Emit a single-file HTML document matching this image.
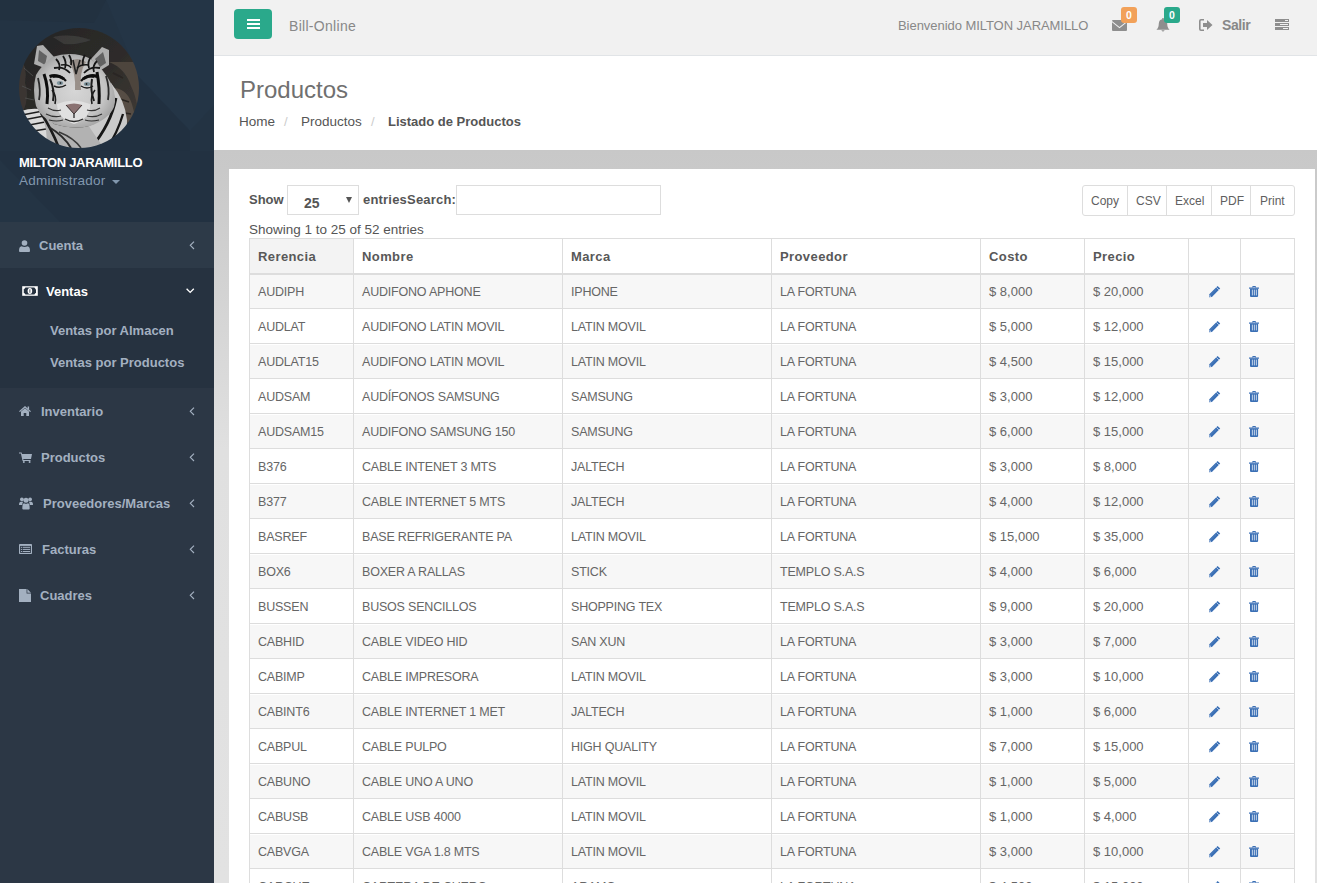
<!DOCTYPE html>
<html><head><meta charset="utf-8"><style>
*{margin:0;padding:0;box-sizing:border-box}
html,body{width:1317px;height:883px;overflow:hidden;background:#fff}
body{font-family:"Liberation Sans",sans-serif;position:relative;color:#555}
div,span{position:absolute;white-space:nowrap}
.ic{line-height:0}
.ic svg{display:block}
.mi{font-weight:bold;font-size:13px;color:#a3b0c0}
.tb{background:#dddddd}
.th{font-weight:bold;font-size:13px;color:#585858;height:34px;line-height:34px;letter-spacing:0.4px}
.td{font-size:12.5px;color:#666;height:33px;line-height:35px;letter-spacing:-0.2px}
.td.num{letter-spacing:0;font-size:13px;line-height:33px}
.btn{top:187px;height:28px;line-height:28px;font-size:12px;color:#606060}
</style></head><body>
<!-- sidebar -->
<div style="left:0;top:0;width:214px;height:883px;background:#2c3745"></div>
<div style="left:0;top:0;width:214px;height:222px;background:#233343;overflow:hidden">
<svg width="214" height="222" style="position:absolute;left:0;top:0"><path d="M0 0 H106 L94 23 L0 20Z" fill="#223140"/><path d="M106 0 H214 V105 L190 131 L138 76Z" fill="#243546"/><path d="M138 76 L190 131 V151 H100 V110Z" fill="#213040" opacity="0.8"/><path d="M0 151 H214 V222 H0Z" fill="#223141"/><path d="M0 160 L60 222 H0Z" fill="#243444"/></svg>
</div>
<svg width="120" height="120" viewBox="0 0 120 120" style="position:absolute;left:19px;top:28px">
<defs><clipPath id="cc"><circle cx="60" cy="60" r="60"/></clipPath>
<filter id="bl" x="-5%" y="-5%" width="110%" height="110%"><feGaussianBlur stdDeviation="0.6"/></filter>
<radialGradient id="fur" cx="50%" cy="50%" r="58%"><stop offset="0" stop-color="#d6d6d6"/><stop offset="0.65" stop-color="#c4c4c4"/><stop offset="1" stop-color="#9a9a9a"/></radialGradient>
<linearGradient id="rock" x1="0" y1="0" x2="1" y2="1"><stop offset="0" stop-color="#242424"/><stop offset="0.55" stop-color="#2e2c2a"/><stop offset="1" stop-color="#453f39"/></linearGradient></defs>
<g clip-path="url(#cc)"><g filter="url(#bl)">
<rect width="120" height="120" fill="url(#rock)"/>
<path d="M34 9 Q52 5 72 12 Q60 17 45 16 Z" fill="#3e3e3e" opacity="0.8"/>
<path d="M0 28 Q9 38 6 55 Q11 68 4 84 H0Z" fill="#3a3633"/>
<path d="M5 40 L14 48 M3 58 L12 62 M6 70 L15 72" stroke="#555" stroke-width="1" opacity="0.7"/>
<path d="M90 34 Q106 40 112 58 Q118 70 120 90 V34Z" fill="#4d453e"/>
<path d="M96 60 Q110 62 114 80 L118 96 L104 94Z" fill="#574d44"/>
<path d="M94 45 L104 50 M98 70 L110 74 M100 84 L112 86" stroke="#2a2623" stroke-width="1.5"/>
<path d="M2 83 Q14 79 26 82 L34 120 H0Z" fill="#dadada"/>
<path d="M3 87 L24 83 M4 92 L25 88 M5 98 L26 94 M8 104 L27 101" stroke="#1e1e1e" stroke-width="1.5"/>
<path d="M92 55 Q106 72 108 92 Q109 108 100 120 H60 L70 98 Q88 90 92 55Z" fill="#cacaca"/>
<path d="M97 70 Q92 96 72 120" stroke="#151515" stroke-width="2.8" fill="none"/>
<path d="M104 86 Q98 106 88 120" stroke="#151515" stroke-width="2.3" fill="none"/>
<path d="M92 62 Q90 75 84 88" stroke="#222" stroke-width="1.6" fill="none"/>
<path d="M20 82 Q30 100 27 120 H85 Q72 102 70 98 Q55 102 35 96Z" fill="#b2b2b2"/>
<path d="M22 85 Q32 100 40 120" stroke="#1b1b1b" stroke-width="2.6" fill="none"/>
<path d="M30 99 Q45 108 52 120" stroke="#2a2a2a" stroke-width="2" fill="none"/>
<path d="M40 104 Q55 110 62 120" stroke="#3a3a3a" stroke-width="1.5" fill="none"/>
<path d="M15 36 L18 18 L24 17 L35 29 L28 41Z" fill="#adadad"/>
<path d="M19 33 L20 22 L28 28 L26 37Z" fill="#626262"/>
<path d="M72 31 L83 19 L90 22 L90 37 L82 42Z" fill="#adadad"/>
<path d="M76 31 L84 24 L87 35 L81 39Z" fill="#626262"/>
<path d="M33 29 Q54 22 72 31 Q84 40 93 57 Q98 70 95 79 Q90 91 71 98 Q54 102 35 96 Q21 88 17 78 Q13 62 17 47 Q22 38 33 29Z" fill="url(#fur)"/>
<path d="M50 34 Q57 44 56 62 L62 62 Q60 44 67 34 Q58 28 50 34Z" fill="#8f857e" opacity="0.85"/>
<path d="M37 31 Q42 36 40 42 M44 28 Q48 34 46 40 M50 27 Q53 32 52 37 M66 27 Q63 32 64 37 M72 29 Q68 34 70 40 M78 33 Q73 38 75 44" stroke="#141414" stroke-width="1.8" fill="none"/>
<path d="M35 40 Q45 38 51 45 M65 45 Q71 38 81 40" stroke="#141414" stroke-width="1.8" fill="none"/>
<path d="M54 32 L57 46 L61 32" stroke="#222" stroke-width="1.6" fill="none"/>
<path d="M25 46 Q30 60 28 76" stroke="#0f0f0f" stroke-width="3" fill="none"/>
<path d="M78 44 Q81 60 80 76" stroke="#0f0f0f" stroke-width="3" fill="none"/>
<path d="M31 51 Q36 62 34 73" stroke="#1a1a1a" stroke-width="2" fill="none"/>
<path d="M73 51 Q71 62 75 73" stroke="#1a1a1a" stroke-width="2" fill="none"/>
<path d="M19 50 Q22 62 20 72" stroke="#2a2a2a" stroke-width="1.8" fill="none"/>
<path d="M87 48 Q91 60 89 72" stroke="#2a2a2a" stroke-width="1.8" fill="none"/>
<path d="M34 49 Q41 46 47 53 M62 53 Q68 46 75 49" stroke="#111" stroke-width="2.2" fill="none"/>
<path d="M30 47 Q38 44 46 50 L44 52 Q38 48 31 50Z" fill="#111"/><path d="M79 47 Q71 44 63 50 L65 52 Q71 48 78 50Z" fill="#111"/><path d="M33 62 Q38 68 36 76 M76 62 Q71 68 73 76" stroke="#1a1a1a" stroke-width="1.6" fill="none"/><path d="M42 37 Q50 36 52 40 M58 40 Q62 36 70 37" stroke="#181818" stroke-width="1.4" fill="none"/><ellipse cx="41" cy="55" rx="3.2" ry="2" fill="#8197a0"/><ellipse cx="68" cy="56" rx="3.2" ry="2" fill="#8197a0"/>
<circle cx="41.5" cy="55" r="0.9" fill="#222"/><circle cx="67.5" cy="56" r="0.9" fill="#222"/>
<path d="M35 58 Q41 61 47 57 M62 58 Q68 62 74 58" stroke="#1a1a1a" stroke-width="1.4" fill="none"/>
<path d="M38 76 Q54 69 71 76 Q72 90 55 96 Q38 90 38 76Z" fill="#e0e0e0"/>
<path d="M47 77 Q55 74 63 77 L55 86Z" fill="#8a7272"/>
<path d="M47 77 L55 86 L63 77" stroke="#3a2f2f" stroke-width="1" fill="none"/>
<path d="M55 86 V90 M46 91 Q55 96 64 91" stroke="#2a2a2a" stroke-width="1.3" fill="none"/>
<path d="M29 80 Q36 84 42 82 M68 82 Q75 84 81 80 M27 86 Q35 90 42 88 M68 88 Q76 90 83 86 M30 92 Q38 94 44 92 M66 92 Q72 94 80 92" stroke="#333" stroke-width="1.2" fill="none"/>
</g></g></svg>
<div style="left:19px;top:155px;font-weight:bold;font-size:13px;line-height:16px;color:#fff;letter-spacing:-0.3px">MILTON JARAMILLO</div>
<div style="left:19px;top:173px;font-size:13.5px;line-height:16px;color:#8197ae;letter-spacing:0.25px">Administrador</div>
<svg width="8" height="4" style="position:absolute;left:112px;top:180px"><path d="M0 0 H8 L4 4Z" fill="#8197ae"/></svg>
<div style="position:absolute;left:0;top:222px;width:214px;height:46px;background:#2d3a48"></div>
<div class="ic" style="left:19px;top:240px"><svg width="11" height="12" viewBox="0 0 11 12"><circle cx="5.5" cy="3" r="2.8" fill="#a3b0c0"/><path d="M0 11 Q0 6.5 2.5 6.2 Q5.5 7.6 8.5 6.2 Q11 6.5 11 11 Q11 12 10 12 H1 Q0 12 0 11Z" fill="#a3b0c0"/></svg></div>
<div class="mi" style="left:39px;top:223px;height:46px;line-height:46px;color:#a3b0c0">Cuenta</div>
<div class="ic" style="left:189px;top:241px"><svg width="6" height="9" viewBox="0 0 6 9"><path d="M5 0.6 L1.3 4.3 L5 8" fill="none" stroke="#a3b0c0" stroke-width="1.15"/></svg></div><div style="position:absolute;left:0;top:268px;width:214px;height:120px;background:#263240"></div><div class="ic" style="left:22px;top:286px"><svg width="16" height="10" viewBox="0 0 16 10"><rect x="0.2" y="0.2" width="15.6" height="9.6" fill="#fff"/><path d="M3.5 1.6 H12.3 L14 3.6 V6.4 L12.3 8.4 H3.5 L1.8 6.4 V3.6Z" fill="#263240"/><ellipse cx="7.9" cy="5" rx="2.3" ry="2.9" fill="#fff"/><rect x="7.5" y="3.3" width="0.8" height="3.4" fill="#263240"/></svg></div><div class="mi" style="left:46px;top:269px;height:46px;line-height:46px;color:#fff">Ventas</div><div class="ic" style="left:186px;top:288px"><svg width="9" height="6" viewBox="0 0 9 6"><path d="M0.6 0.8 L4.2 4.4 L7.8 0.8" fill="none" stroke="#fff" stroke-width="1.35"/></svg></div><div class="mi" style="left:50px;top:315px;height:32px;line-height:32px">Ventas por Almacen</div><div class="mi" style="left:50px;top:347px;height:32px;line-height:32px">Ventas por Productos</div><div class="ic" style="left:19px;top:406px"><svg width="12" height="10" viewBox="0 0 12 10"><path d="M6 0 L12 5.2 L11.1 6.1 L6 1.8 L0.9 6.1 L0 5.2 Z" fill="#a3b0c0"/><path d="M2 5.5 L6 2.3 L10 5.5 V10 H7.3 V7 H4.7 V10 H2Z" fill="#a3b0c0"/><rect x="8.6" y="0.5" width="1.5" height="2.8" fill="#a3b0c0"/></svg></div>
<div class="mi" style="left:41px;top:389px;height:46px;line-height:46px;color:#a3b0c0">Inventario</div>
<div class="ic" style="left:189px;top:407px"><svg width="6" height="9" viewBox="0 0 6 9"><path d="M5 0.6 L1.3 4.3 L5 8" fill="none" stroke="#a3b0c0" stroke-width="1.15"/></svg></div><div class="ic" style="left:19px;top:452px"><svg width="13" height="11" viewBox="0 0 13 11"><path d="M0 0.5 H2.6 L3 2 H13 L12 7 H4.2 L4.5 8 H11.5 V9 H3.6 L1.9 1.6 H0Z" fill="#a3b0c0"/><circle cx="4.8" cy="10" r="1" fill="#a3b0c0"/><circle cx="10.6" cy="10" r="1" fill="#a3b0c0"/></svg></div>
<div class="mi" style="left:41px;top:435px;height:46px;line-height:46px;color:#a3b0c0">Productos</div>
<div class="ic" style="left:189px;top:453px"><svg width="6" height="9" viewBox="0 0 6 9"><path d="M5 0.6 L1.3 4.3 L5 8" fill="none" stroke="#a3b0c0" stroke-width="1.15"/></svg></div><div class="ic" style="left:19px;top:497px"><svg width="14" height="13" viewBox="0 0 14 13"><circle cx="2.9" cy="2.3" r="1.9" fill="#a3b0c0"/><circle cx="11.1" cy="2.3" r="1.9" fill="#a3b0c0"/><circle cx="7" cy="3.3" r="2.5" fill="#a3b0c0"/><path d="M0 8 Q0 4.8 2 4.8 H4.2 Q3.3 5.8 3.3 8Z" fill="#a3b0c0"/><path d="M14 8 Q14 4.8 12 4.8 H9.8 Q10.7 5.8 10.7 8Z" fill="#a3b0c0"/><path d="M3.3 11.5 Q3.3 6.3 5.2 6.3 Q7 7.4 8.8 6.3 Q10.7 6.3 10.7 11.5 Q10.7 12.6 9.7 12.6 H4.3 Q3.3 12.6 3.3 11.5Z" fill="#a3b0c0"/></svg></div>
<div class="mi" style="left:43px;top:481px;height:46px;line-height:46px;color:#a3b0c0">Proveedores/Marcas</div>
<div class="ic" style="left:189px;top:499px"><svg width="6" height="9" viewBox="0 0 6 9"><path d="M5 0.6 L1.3 4.3 L5 8" fill="none" stroke="#a3b0c0" stroke-width="1.15"/></svg></div><div class="ic" style="left:19px;top:544px"><svg width="13" height="10" viewBox="0 0 13 10"><rect x="0" y="0" width="13" height="10" rx="0.8" fill="#a3b0c0"/><rect x="1.1" y="1.9" width="10.8" height="7" fill="#2c3745"/><rect x="1.9" y="2.8" width="1.4" height="1" fill="#a3b0c0"/><rect x="4" y="2.8" width="7.1" height="1" fill="#a3b0c0"/><rect x="1.9" y="4.9" width="1.4" height="1" fill="#a3b0c0"/><rect x="4" y="4.9" width="7.1" height="1" fill="#a3b0c0"/><rect x="1.9" y="7" width="1.4" height="1" fill="#a3b0c0"/><rect x="4" y="7" width="7.1" height="1" fill="#a3b0c0"/></svg></div>
<div class="mi" style="left:42px;top:527px;height:46px;line-height:46px;color:#a3b0c0">Facturas</div>
<div class="ic" style="left:189px;top:545px"><svg width="6" height="9" viewBox="0 0 6 9"><path d="M5 0.6 L1.3 4.3 L5 8" fill="none" stroke="#a3b0c0" stroke-width="1.15"/></svg></div><div class="ic" style="left:19px;top:589px"><svg width="12" height="13" viewBox="0 0 12 13"><path d="M0 0 H7.6 V4.4 H12 V13 H0Z" fill="#a3b0c0"/><path d="M8.3 0 L12 3.7 H8.3Z" fill="#a3b0c0"/></svg></div>
<div class="mi" style="left:40px;top:573px;height:46px;line-height:46px;color:#a3b0c0">Cuadres</div>
<div class="ic" style="left:189px;top:591px"><svg width="6" height="9" viewBox="0 0 6 9"><path d="M5 0.6 L1.3 4.3 L5 8" fill="none" stroke="#a3b0c0" stroke-width="1.15"/></svg></div>
<!-- topbar -->
<div style="left:214px;top:0;width:1103px;height:55px;background:#f1f1f1"></div>
<div style="left:214px;top:55px;width:1103px;height:1px;background:#e1e4e7"></div>
<div style="left:234px;top:9px;width:38px;height:30px;background:#2aa98b;border-radius:4px"></div>
<div style="left:247px;top:19px;width:13px;height:2px;background:#fff"></div>
<div style="left:247px;top:23px;width:13px;height:2px;background:#fff"></div>
<div style="left:247px;top:27px;width:13px;height:2px;background:#fff"></div>
<div style="left:289px;top:17px;font-size:14px;line-height:18px;color:#888;letter-spacing:0.3px">Bill-Online</div>
<div style="left:898px;top:17px;font-size:13px;line-height:18px;color:#888;letter-spacing:-0.05px">Bienvenido MILTON JARAMILLO</div>
<svg width="15" height="11" style="position:absolute;left:1112px;top:20px" viewBox="0 0 15 11"><path d="M0 1 Q0 0 1 0 H14 Q15 0 15 1 V0.9 L7.5 6.9 L0 0.9Z" fill="#8e8e8e"/><path d="M0 2.3 L7.5 8.3 L15 2.3 V10 Q15 11 14 11 H1 Q0 11 0 10Z" fill="#8e8e8e"/></svg>
<div style="left:1121px;top:7px;width:16px;height:16px;background:#f2a159;border-radius:3px;color:#fff;font-weight:bold;font-size:10.5px;line-height:17px;text-align:center">0</div>
<svg width="14" height="14" style="position:absolute;left:1156px;top:18px" viewBox="0 0 14 14"><circle cx="7" cy="1" r="1" fill="#8e8e8e"/><path d="M7 1.2 Q11 1.2 11.2 5.5 Q11.3 10 13.6 11.8 H0.4 Q2.7 10 2.8 5.5 Q3 1.2 7 1.2Z" fill="#8e8e8e"/><path d="M5.3 12.2 Q7 14.6 8.7 12.2Z" fill="#8e8e8e"/></svg>
<div style="left:1164px;top:7px;width:16px;height:16px;background:#2aa98b;border-radius:3px;color:#fff;font-weight:bold;font-size:10.5px;line-height:17px;text-align:center">0</div>
<svg width="14" height="12" style="position:absolute;left:1199px;top:19px" viewBox="0 0 14 12"><path d="M5 0.8 H2 Q0.8 0.8 0.8 2 V10 Q0.8 11.2 2 11.2 H5" fill="none" stroke="#8e8e8e" stroke-width="1.6"/><path d="M4 4 H8 V1 L13.5 6 L8 11 V8 H4Z" fill="#8e8e8e"/></svg>
<div style="left:1222px;top:16px;font-size:14px;font-weight:bold;line-height:18px;color:#888;letter-spacing:-0.4px">Salir</div>
<svg width="14" height="12" style="position:absolute;left:1275px;top:19px" viewBox="0 0 14 12"><rect x="0" y="0" width="14" height="3" fill="#8e8e8e"/><rect x="0" y="4" width="14" height="3" fill="#8e8e8e"/><rect x="0" y="8" width="14" height="3" fill="#8e8e8e"/><rect x="10" y="1" width="3" height="1" fill="#f1f1f1"/><rect x="5" y="5" width="8" height="1" fill="#f1f1f1"/><rect x="8" y="9" width="5" height="1" fill="#f1f1f1"/></svg>
<!-- page header -->
<div style="left:240px;top:75px;font-size:24px;line-height:30px;color:#707070">Productos</div>
<div style="left:239px;top:113px;font-size:13.5px;line-height:18px;color:#555">Home</div>
<div style="left:284px;top:113px;font-size:13px;line-height:18px;color:#ccc">/</div>
<div style="left:301px;top:113px;font-size:13.5px;line-height:18px;color:#555">Productos</div>
<div style="left:371px;top:113px;font-size:13px;line-height:18px;color:#ccc">/</div>
<div style="left:388px;top:113px;font-size:13px;font-weight:bold;line-height:18px;color:#555">Listado de Productos</div>
<!-- content bg -->
<div style="left:214px;top:150px;width:1103px;height:733px;background:linear-gradient(#c8c8c8 0px,#c9c9c9 20px,#e0e0e0 300px,#e2e2e2 733px)"></div>
<div style="left:229px;top:169px;width:1086px;height:714px;background:#fff"></div>
<div style="left:249px;top:194px;font-weight:bold;font-size:13px;line-height:12px;color:#555">Show</div>
<div style="left:287px;top:185px;width:72px;height:30px;border:1px solid #ddd;background:#fff"></div>
<div style="left:304px;top:197px;font-weight:bold;font-size:14px;line-height:13px;color:#555">25</div>
<svg width="6" height="6" style="position:absolute;left:346px;top:197px"><path d="M0 0 H6 L3 6Z" fill="#555"/></svg>
<div style="left:363px;top:194px;font-weight:bold;font-size:13px;line-height:12px;color:#555;letter-spacing:0.2px">entriesSearch:</div>
<div style="left:456px;top:185px;width:205px;height:30px;border:1px solid #ddd;background:#fff"></div>
<div style="left:1082px;top:185px;width:213px;height:31px;border:1px solid #ddd;border-radius:3px;background:#fff"></div>
<div style="left:1127px;top:186px;width:1px;height:29px;background:#ddd"></div>
<div style="left:1166px;top:186px;width:1px;height:29px;background:#ddd"></div>
<div style="left:1211px;top:186px;width:1px;height:29px;background:#ddd"></div>
<div style="left:1250px;top:186px;width:1px;height:29px;background:#ddd"></div>
<div class="btn" style="left:1091px">Copy</div>
<div class="btn" style="left:1136px">CSV</div>
<div class="btn" style="left:1175px">Excel</div>
<div class="btn" style="left:1220px">PDF</div>
<div class="btn" style="left:1260px">Print</div>
<div style="left:249px;top:224px;font-size:13.5px;line-height:12px;color:#555">Showing 1 to 25 of 52 entries</div>
<div class="tb" style="left:249px;top:238px;width:1046px;height:1px"></div>
<div style="position:absolute;left:250px;top:239px;width:103px;height:34px;background:#f3f3f3"></div>
<div class="th" style="left:258px;top:240px">Rerencia</div>
<div class="th" style="left:362px;top:240px">Nombre</div>
<div class="th" style="left:571px;top:240px">Marca</div>
<div class="th" style="left:780px;top:240px">Proveedor</div>
<div class="th" style="left:989px;top:240px">Costo</div>
<div class="th" style="left:1093px;top:240px">Precio</div>
<div class="th" style="left:1197px;top:240px"></div>
<div class="th" style="left:1249px;top:240px"></div>
<div class="tb" style="left:249px;top:273px;width:1046px;height:2px"></div>
<div style="position:absolute;left:250px;top:275px;width:1044px;height:33px;background:#f7f7f7"></div>
<div class="td" style="left:258px;top:275px">AUDIPH</div>
<div class="td" style="left:362px;top:275px">AUDIFONO APHONE</div>
<div class="td" style="left:571px;top:275px">IPHONE</div>
<div class="td" style="left:780px;top:275px">LA FORTUNA</div>
<div class="td num" style="left:989px;top:275px">$ 8,000</div>
<div class="td num" style="left:1093px;top:275px">$ 20,000</div>
<div class="ic" style="left:1209px;top:286px"><svg width="12" height="12" viewBox="0 0 12 12"><path d="M8.6 0 L11.2 2.6 L2.9 10.9 L0 11.2 L0.3 8.3 Z" fill="#3a6fb5"/><path d="M7.3 1.3 L9.9 3.9" stroke="#dbe6f3" stroke-width="0.75"/><path d="M1.8 8.6 L7.6 2.8" stroke="#7fa3d0" stroke-width="0.6" stroke-dasharray="0.8 0.8"/><path d="M0.7 8.9 L2.3 10.5 L0.5 10.7Z" fill="#f0f4fa"/></svg></div>
<div class="ic" style="left:1249px;top:286px"><svg width="10" height="12" viewBox="0 0 10 12"><path d="M3.2 1.6 V0.9 Q3.2 0 4.1 0 H6.1 Q7 0 7 0.9 V1.6 H6 V1 H4.2 V1.6Z" fill="#3a6fb5"/><rect x="0" y="1.5" width="10" height="1.2" fill="#3a6fb5"/><path d="M1 2.6 H9.1 V10 Q9.1 11.1 8 11.1 H2.1 Q1 11.1 1 10Z" fill="#3a6fb5"/><rect x="2.9" y="3.6" width="0.8" height="5.8" fill="#e6edf6"/><rect x="4.9" y="3.6" width="0.8" height="5.8" fill="#e6edf6"/><rect x="6.9" y="3.6" width="0.8" height="5.8" fill="#e6edf6"/></svg></div>
<div class="tb" style="left:249px;top:308px;width:1046px;height:1px"></div>
<div style="position:absolute;left:250px;top:310px;width:1044px;height:33px;background:#fff"></div>
<div class="td" style="left:258px;top:310px">AUDLAT</div>
<div class="td" style="left:362px;top:310px">AUDIFONO LATIN MOVIL</div>
<div class="td" style="left:571px;top:310px">LATIN MOVIL</div>
<div class="td" style="left:780px;top:310px">LA FORTUNA</div>
<div class="td num" style="left:989px;top:310px">$ 5,000</div>
<div class="td num" style="left:1093px;top:310px">$ 12,000</div>
<div class="ic" style="left:1209px;top:321px"><svg width="12" height="12" viewBox="0 0 12 12"><path d="M8.6 0 L11.2 2.6 L2.9 10.9 L0 11.2 L0.3 8.3 Z" fill="#3a6fb5"/><path d="M7.3 1.3 L9.9 3.9" stroke="#dbe6f3" stroke-width="0.75"/><path d="M1.8 8.6 L7.6 2.8" stroke="#7fa3d0" stroke-width="0.6" stroke-dasharray="0.8 0.8"/><path d="M0.7 8.9 L2.3 10.5 L0.5 10.7Z" fill="#f0f4fa"/></svg></div>
<div class="ic" style="left:1249px;top:321px"><svg width="10" height="12" viewBox="0 0 10 12"><path d="M3.2 1.6 V0.9 Q3.2 0 4.1 0 H6.1 Q7 0 7 0.9 V1.6 H6 V1 H4.2 V1.6Z" fill="#3a6fb5"/><rect x="0" y="1.5" width="10" height="1.2" fill="#3a6fb5"/><path d="M1 2.6 H9.1 V10 Q9.1 11.1 8 11.1 H2.1 Q1 11.1 1 10Z" fill="#3a6fb5"/><rect x="2.9" y="3.6" width="0.8" height="5.8" fill="#e6edf6"/><rect x="4.9" y="3.6" width="0.8" height="5.8" fill="#e6edf6"/><rect x="6.9" y="3.6" width="0.8" height="5.8" fill="#e6edf6"/></svg></div>
<div class="tb" style="left:249px;top:343px;width:1046px;height:1px"></div>
<div style="position:absolute;left:250px;top:345px;width:1044px;height:33px;background:#f7f7f7"></div>
<div class="td" style="left:258px;top:345px">AUDLAT15</div>
<div class="td" style="left:362px;top:345px">AUDIFONO LATIN MOVIL</div>
<div class="td" style="left:571px;top:345px">LATIN MOVIL</div>
<div class="td" style="left:780px;top:345px">LA FORTUNA</div>
<div class="td num" style="left:989px;top:345px">$ 4,500</div>
<div class="td num" style="left:1093px;top:345px">$ 15,000</div>
<div class="ic" style="left:1209px;top:356px"><svg width="12" height="12" viewBox="0 0 12 12"><path d="M8.6 0 L11.2 2.6 L2.9 10.9 L0 11.2 L0.3 8.3 Z" fill="#3a6fb5"/><path d="M7.3 1.3 L9.9 3.9" stroke="#dbe6f3" stroke-width="0.75"/><path d="M1.8 8.6 L7.6 2.8" stroke="#7fa3d0" stroke-width="0.6" stroke-dasharray="0.8 0.8"/><path d="M0.7 8.9 L2.3 10.5 L0.5 10.7Z" fill="#f0f4fa"/></svg></div>
<div class="ic" style="left:1249px;top:356px"><svg width="10" height="12" viewBox="0 0 10 12"><path d="M3.2 1.6 V0.9 Q3.2 0 4.1 0 H6.1 Q7 0 7 0.9 V1.6 H6 V1 H4.2 V1.6Z" fill="#3a6fb5"/><rect x="0" y="1.5" width="10" height="1.2" fill="#3a6fb5"/><path d="M1 2.6 H9.1 V10 Q9.1 11.1 8 11.1 H2.1 Q1 11.1 1 10Z" fill="#3a6fb5"/><rect x="2.9" y="3.6" width="0.8" height="5.8" fill="#e6edf6"/><rect x="4.9" y="3.6" width="0.8" height="5.8" fill="#e6edf6"/><rect x="6.9" y="3.6" width="0.8" height="5.8" fill="#e6edf6"/></svg></div>
<div class="tb" style="left:249px;top:378px;width:1046px;height:1px"></div>
<div style="position:absolute;left:250px;top:380px;width:1044px;height:33px;background:#fff"></div>
<div class="td" style="left:258px;top:380px">AUDSAM</div>
<div class="td" style="left:362px;top:380px">AUDÍFONOS SAMSUNG</div>
<div class="td" style="left:571px;top:380px">SAMSUNG</div>
<div class="td" style="left:780px;top:380px">LA FORTUNA</div>
<div class="td num" style="left:989px;top:380px">$ 3,000</div>
<div class="td num" style="left:1093px;top:380px">$ 12,000</div>
<div class="ic" style="left:1209px;top:391px"><svg width="12" height="12" viewBox="0 0 12 12"><path d="M8.6 0 L11.2 2.6 L2.9 10.9 L0 11.2 L0.3 8.3 Z" fill="#3a6fb5"/><path d="M7.3 1.3 L9.9 3.9" stroke="#dbe6f3" stroke-width="0.75"/><path d="M1.8 8.6 L7.6 2.8" stroke="#7fa3d0" stroke-width="0.6" stroke-dasharray="0.8 0.8"/><path d="M0.7 8.9 L2.3 10.5 L0.5 10.7Z" fill="#f0f4fa"/></svg></div>
<div class="ic" style="left:1249px;top:391px"><svg width="10" height="12" viewBox="0 0 10 12"><path d="M3.2 1.6 V0.9 Q3.2 0 4.1 0 H6.1 Q7 0 7 0.9 V1.6 H6 V1 H4.2 V1.6Z" fill="#3a6fb5"/><rect x="0" y="1.5" width="10" height="1.2" fill="#3a6fb5"/><path d="M1 2.6 H9.1 V10 Q9.1 11.1 8 11.1 H2.1 Q1 11.1 1 10Z" fill="#3a6fb5"/><rect x="2.9" y="3.6" width="0.8" height="5.8" fill="#e6edf6"/><rect x="4.9" y="3.6" width="0.8" height="5.8" fill="#e6edf6"/><rect x="6.9" y="3.6" width="0.8" height="5.8" fill="#e6edf6"/></svg></div>
<div class="tb" style="left:249px;top:413px;width:1046px;height:1px"></div>
<div style="position:absolute;left:250px;top:415px;width:1044px;height:33px;background:#f7f7f7"></div>
<div class="td" style="left:258px;top:415px">AUDSAM15</div>
<div class="td" style="left:362px;top:415px">AUDIFONO SAMSUNG 150</div>
<div class="td" style="left:571px;top:415px">SAMSUNG</div>
<div class="td" style="left:780px;top:415px">LA FORTUNA</div>
<div class="td num" style="left:989px;top:415px">$ 6,000</div>
<div class="td num" style="left:1093px;top:415px">$ 15,000</div>
<div class="ic" style="left:1209px;top:426px"><svg width="12" height="12" viewBox="0 0 12 12"><path d="M8.6 0 L11.2 2.6 L2.9 10.9 L0 11.2 L0.3 8.3 Z" fill="#3a6fb5"/><path d="M7.3 1.3 L9.9 3.9" stroke="#dbe6f3" stroke-width="0.75"/><path d="M1.8 8.6 L7.6 2.8" stroke="#7fa3d0" stroke-width="0.6" stroke-dasharray="0.8 0.8"/><path d="M0.7 8.9 L2.3 10.5 L0.5 10.7Z" fill="#f0f4fa"/></svg></div>
<div class="ic" style="left:1249px;top:426px"><svg width="10" height="12" viewBox="0 0 10 12"><path d="M3.2 1.6 V0.9 Q3.2 0 4.1 0 H6.1 Q7 0 7 0.9 V1.6 H6 V1 H4.2 V1.6Z" fill="#3a6fb5"/><rect x="0" y="1.5" width="10" height="1.2" fill="#3a6fb5"/><path d="M1 2.6 H9.1 V10 Q9.1 11.1 8 11.1 H2.1 Q1 11.1 1 10Z" fill="#3a6fb5"/><rect x="2.9" y="3.6" width="0.8" height="5.8" fill="#e6edf6"/><rect x="4.9" y="3.6" width="0.8" height="5.8" fill="#e6edf6"/><rect x="6.9" y="3.6" width="0.8" height="5.8" fill="#e6edf6"/></svg></div>
<div class="tb" style="left:249px;top:448px;width:1046px;height:1px"></div>
<div style="position:absolute;left:250px;top:450px;width:1044px;height:33px;background:#fff"></div>
<div class="td" style="left:258px;top:450px">B376</div>
<div class="td" style="left:362px;top:450px">CABLE INTENET 3 MTS</div>
<div class="td" style="left:571px;top:450px">JALTECH</div>
<div class="td" style="left:780px;top:450px">LA FORTUNA</div>
<div class="td num" style="left:989px;top:450px">$ 3,000</div>
<div class="td num" style="left:1093px;top:450px">$ 8,000</div>
<div class="ic" style="left:1209px;top:461px"><svg width="12" height="12" viewBox="0 0 12 12"><path d="M8.6 0 L11.2 2.6 L2.9 10.9 L0 11.2 L0.3 8.3 Z" fill="#3a6fb5"/><path d="M7.3 1.3 L9.9 3.9" stroke="#dbe6f3" stroke-width="0.75"/><path d="M1.8 8.6 L7.6 2.8" stroke="#7fa3d0" stroke-width="0.6" stroke-dasharray="0.8 0.8"/><path d="M0.7 8.9 L2.3 10.5 L0.5 10.7Z" fill="#f0f4fa"/></svg></div>
<div class="ic" style="left:1249px;top:461px"><svg width="10" height="12" viewBox="0 0 10 12"><path d="M3.2 1.6 V0.9 Q3.2 0 4.1 0 H6.1 Q7 0 7 0.9 V1.6 H6 V1 H4.2 V1.6Z" fill="#3a6fb5"/><rect x="0" y="1.5" width="10" height="1.2" fill="#3a6fb5"/><path d="M1 2.6 H9.1 V10 Q9.1 11.1 8 11.1 H2.1 Q1 11.1 1 10Z" fill="#3a6fb5"/><rect x="2.9" y="3.6" width="0.8" height="5.8" fill="#e6edf6"/><rect x="4.9" y="3.6" width="0.8" height="5.8" fill="#e6edf6"/><rect x="6.9" y="3.6" width="0.8" height="5.8" fill="#e6edf6"/></svg></div>
<div class="tb" style="left:249px;top:483px;width:1046px;height:1px"></div>
<div style="position:absolute;left:250px;top:485px;width:1044px;height:33px;background:#f7f7f7"></div>
<div class="td" style="left:258px;top:485px">B377</div>
<div class="td" style="left:362px;top:485px">CABLE INTERNET 5 MTS</div>
<div class="td" style="left:571px;top:485px">JALTECH</div>
<div class="td" style="left:780px;top:485px">LA FORTUNA</div>
<div class="td num" style="left:989px;top:485px">$ 4,000</div>
<div class="td num" style="left:1093px;top:485px">$ 12,000</div>
<div class="ic" style="left:1209px;top:496px"><svg width="12" height="12" viewBox="0 0 12 12"><path d="M8.6 0 L11.2 2.6 L2.9 10.9 L0 11.2 L0.3 8.3 Z" fill="#3a6fb5"/><path d="M7.3 1.3 L9.9 3.9" stroke="#dbe6f3" stroke-width="0.75"/><path d="M1.8 8.6 L7.6 2.8" stroke="#7fa3d0" stroke-width="0.6" stroke-dasharray="0.8 0.8"/><path d="M0.7 8.9 L2.3 10.5 L0.5 10.7Z" fill="#f0f4fa"/></svg></div>
<div class="ic" style="left:1249px;top:496px"><svg width="10" height="12" viewBox="0 0 10 12"><path d="M3.2 1.6 V0.9 Q3.2 0 4.1 0 H6.1 Q7 0 7 0.9 V1.6 H6 V1 H4.2 V1.6Z" fill="#3a6fb5"/><rect x="0" y="1.5" width="10" height="1.2" fill="#3a6fb5"/><path d="M1 2.6 H9.1 V10 Q9.1 11.1 8 11.1 H2.1 Q1 11.1 1 10Z" fill="#3a6fb5"/><rect x="2.9" y="3.6" width="0.8" height="5.8" fill="#e6edf6"/><rect x="4.9" y="3.6" width="0.8" height="5.8" fill="#e6edf6"/><rect x="6.9" y="3.6" width="0.8" height="5.8" fill="#e6edf6"/></svg></div>
<div class="tb" style="left:249px;top:518px;width:1046px;height:1px"></div>
<div style="position:absolute;left:250px;top:520px;width:1044px;height:33px;background:#fff"></div>
<div class="td" style="left:258px;top:520px">BASREF</div>
<div class="td" style="left:362px;top:520px">BASE REFRIGERANTE PA</div>
<div class="td" style="left:571px;top:520px">LATIN MOVIL</div>
<div class="td" style="left:780px;top:520px">LA FORTUNA</div>
<div class="td num" style="left:989px;top:520px">$ 15,000</div>
<div class="td num" style="left:1093px;top:520px">$ 35,000</div>
<div class="ic" style="left:1209px;top:531px"><svg width="12" height="12" viewBox="0 0 12 12"><path d="M8.6 0 L11.2 2.6 L2.9 10.9 L0 11.2 L0.3 8.3 Z" fill="#3a6fb5"/><path d="M7.3 1.3 L9.9 3.9" stroke="#dbe6f3" stroke-width="0.75"/><path d="M1.8 8.6 L7.6 2.8" stroke="#7fa3d0" stroke-width="0.6" stroke-dasharray="0.8 0.8"/><path d="M0.7 8.9 L2.3 10.5 L0.5 10.7Z" fill="#f0f4fa"/></svg></div>
<div class="ic" style="left:1249px;top:531px"><svg width="10" height="12" viewBox="0 0 10 12"><path d="M3.2 1.6 V0.9 Q3.2 0 4.1 0 H6.1 Q7 0 7 0.9 V1.6 H6 V1 H4.2 V1.6Z" fill="#3a6fb5"/><rect x="0" y="1.5" width="10" height="1.2" fill="#3a6fb5"/><path d="M1 2.6 H9.1 V10 Q9.1 11.1 8 11.1 H2.1 Q1 11.1 1 10Z" fill="#3a6fb5"/><rect x="2.9" y="3.6" width="0.8" height="5.8" fill="#e6edf6"/><rect x="4.9" y="3.6" width="0.8" height="5.8" fill="#e6edf6"/><rect x="6.9" y="3.6" width="0.8" height="5.8" fill="#e6edf6"/></svg></div>
<div class="tb" style="left:249px;top:553px;width:1046px;height:1px"></div>
<div style="position:absolute;left:250px;top:555px;width:1044px;height:33px;background:#f7f7f7"></div>
<div class="td" style="left:258px;top:555px">BOX6</div>
<div class="td" style="left:362px;top:555px">BOXER A RALLAS</div>
<div class="td" style="left:571px;top:555px">STICK</div>
<div class="td" style="left:780px;top:555px">TEMPLO S.A.S</div>
<div class="td num" style="left:989px;top:555px">$ 4,000</div>
<div class="td num" style="left:1093px;top:555px">$ 6,000</div>
<div class="ic" style="left:1209px;top:566px"><svg width="12" height="12" viewBox="0 0 12 12"><path d="M8.6 0 L11.2 2.6 L2.9 10.9 L0 11.2 L0.3 8.3 Z" fill="#3a6fb5"/><path d="M7.3 1.3 L9.9 3.9" stroke="#dbe6f3" stroke-width="0.75"/><path d="M1.8 8.6 L7.6 2.8" stroke="#7fa3d0" stroke-width="0.6" stroke-dasharray="0.8 0.8"/><path d="M0.7 8.9 L2.3 10.5 L0.5 10.7Z" fill="#f0f4fa"/></svg></div>
<div class="ic" style="left:1249px;top:566px"><svg width="10" height="12" viewBox="0 0 10 12"><path d="M3.2 1.6 V0.9 Q3.2 0 4.1 0 H6.1 Q7 0 7 0.9 V1.6 H6 V1 H4.2 V1.6Z" fill="#3a6fb5"/><rect x="0" y="1.5" width="10" height="1.2" fill="#3a6fb5"/><path d="M1 2.6 H9.1 V10 Q9.1 11.1 8 11.1 H2.1 Q1 11.1 1 10Z" fill="#3a6fb5"/><rect x="2.9" y="3.6" width="0.8" height="5.8" fill="#e6edf6"/><rect x="4.9" y="3.6" width="0.8" height="5.8" fill="#e6edf6"/><rect x="6.9" y="3.6" width="0.8" height="5.8" fill="#e6edf6"/></svg></div>
<div class="tb" style="left:249px;top:588px;width:1046px;height:1px"></div>
<div style="position:absolute;left:250px;top:590px;width:1044px;height:33px;background:#fff"></div>
<div class="td" style="left:258px;top:590px">BUSSEN</div>
<div class="td" style="left:362px;top:590px">BUSOS SENCILLOS</div>
<div class="td" style="left:571px;top:590px">SHOPPING TEX</div>
<div class="td" style="left:780px;top:590px">TEMPLO S.A.S</div>
<div class="td num" style="left:989px;top:590px">$ 9,000</div>
<div class="td num" style="left:1093px;top:590px">$ 20,000</div>
<div class="ic" style="left:1209px;top:601px"><svg width="12" height="12" viewBox="0 0 12 12"><path d="M8.6 0 L11.2 2.6 L2.9 10.9 L0 11.2 L0.3 8.3 Z" fill="#3a6fb5"/><path d="M7.3 1.3 L9.9 3.9" stroke="#dbe6f3" stroke-width="0.75"/><path d="M1.8 8.6 L7.6 2.8" stroke="#7fa3d0" stroke-width="0.6" stroke-dasharray="0.8 0.8"/><path d="M0.7 8.9 L2.3 10.5 L0.5 10.7Z" fill="#f0f4fa"/></svg></div>
<div class="ic" style="left:1249px;top:601px"><svg width="10" height="12" viewBox="0 0 10 12"><path d="M3.2 1.6 V0.9 Q3.2 0 4.1 0 H6.1 Q7 0 7 0.9 V1.6 H6 V1 H4.2 V1.6Z" fill="#3a6fb5"/><rect x="0" y="1.5" width="10" height="1.2" fill="#3a6fb5"/><path d="M1 2.6 H9.1 V10 Q9.1 11.1 8 11.1 H2.1 Q1 11.1 1 10Z" fill="#3a6fb5"/><rect x="2.9" y="3.6" width="0.8" height="5.8" fill="#e6edf6"/><rect x="4.9" y="3.6" width="0.8" height="5.8" fill="#e6edf6"/><rect x="6.9" y="3.6" width="0.8" height="5.8" fill="#e6edf6"/></svg></div>
<div class="tb" style="left:249px;top:623px;width:1046px;height:1px"></div>
<div style="position:absolute;left:250px;top:625px;width:1044px;height:33px;background:#f7f7f7"></div>
<div class="td" style="left:258px;top:625px">CABHID</div>
<div class="td" style="left:362px;top:625px">CABLE VIDEO HID</div>
<div class="td" style="left:571px;top:625px">SAN XUN</div>
<div class="td" style="left:780px;top:625px">LA FORTUNA</div>
<div class="td num" style="left:989px;top:625px">$ 3,000</div>
<div class="td num" style="left:1093px;top:625px">$ 7,000</div>
<div class="ic" style="left:1209px;top:636px"><svg width="12" height="12" viewBox="0 0 12 12"><path d="M8.6 0 L11.2 2.6 L2.9 10.9 L0 11.2 L0.3 8.3 Z" fill="#3a6fb5"/><path d="M7.3 1.3 L9.9 3.9" stroke="#dbe6f3" stroke-width="0.75"/><path d="M1.8 8.6 L7.6 2.8" stroke="#7fa3d0" stroke-width="0.6" stroke-dasharray="0.8 0.8"/><path d="M0.7 8.9 L2.3 10.5 L0.5 10.7Z" fill="#f0f4fa"/></svg></div>
<div class="ic" style="left:1249px;top:636px"><svg width="10" height="12" viewBox="0 0 10 12"><path d="M3.2 1.6 V0.9 Q3.2 0 4.1 0 H6.1 Q7 0 7 0.9 V1.6 H6 V1 H4.2 V1.6Z" fill="#3a6fb5"/><rect x="0" y="1.5" width="10" height="1.2" fill="#3a6fb5"/><path d="M1 2.6 H9.1 V10 Q9.1 11.1 8 11.1 H2.1 Q1 11.1 1 10Z" fill="#3a6fb5"/><rect x="2.9" y="3.6" width="0.8" height="5.8" fill="#e6edf6"/><rect x="4.9" y="3.6" width="0.8" height="5.8" fill="#e6edf6"/><rect x="6.9" y="3.6" width="0.8" height="5.8" fill="#e6edf6"/></svg></div>
<div class="tb" style="left:249px;top:658px;width:1046px;height:1px"></div>
<div style="position:absolute;left:250px;top:660px;width:1044px;height:33px;background:#fff"></div>
<div class="td" style="left:258px;top:660px">CABIMP</div>
<div class="td" style="left:362px;top:660px">CABLE IMPRESORA</div>
<div class="td" style="left:571px;top:660px">LATIN MOVIL</div>
<div class="td" style="left:780px;top:660px">LA FORTUNA</div>
<div class="td num" style="left:989px;top:660px">$ 3,000</div>
<div class="td num" style="left:1093px;top:660px">$ 10,000</div>
<div class="ic" style="left:1209px;top:671px"><svg width="12" height="12" viewBox="0 0 12 12"><path d="M8.6 0 L11.2 2.6 L2.9 10.9 L0 11.2 L0.3 8.3 Z" fill="#3a6fb5"/><path d="M7.3 1.3 L9.9 3.9" stroke="#dbe6f3" stroke-width="0.75"/><path d="M1.8 8.6 L7.6 2.8" stroke="#7fa3d0" stroke-width="0.6" stroke-dasharray="0.8 0.8"/><path d="M0.7 8.9 L2.3 10.5 L0.5 10.7Z" fill="#f0f4fa"/></svg></div>
<div class="ic" style="left:1249px;top:671px"><svg width="10" height="12" viewBox="0 0 10 12"><path d="M3.2 1.6 V0.9 Q3.2 0 4.1 0 H6.1 Q7 0 7 0.9 V1.6 H6 V1 H4.2 V1.6Z" fill="#3a6fb5"/><rect x="0" y="1.5" width="10" height="1.2" fill="#3a6fb5"/><path d="M1 2.6 H9.1 V10 Q9.1 11.1 8 11.1 H2.1 Q1 11.1 1 10Z" fill="#3a6fb5"/><rect x="2.9" y="3.6" width="0.8" height="5.8" fill="#e6edf6"/><rect x="4.9" y="3.6" width="0.8" height="5.8" fill="#e6edf6"/><rect x="6.9" y="3.6" width="0.8" height="5.8" fill="#e6edf6"/></svg></div>
<div class="tb" style="left:249px;top:693px;width:1046px;height:1px"></div>
<div style="position:absolute;left:250px;top:695px;width:1044px;height:33px;background:#f7f7f7"></div>
<div class="td" style="left:258px;top:695px">CABINT6</div>
<div class="td" style="left:362px;top:695px">CABLE INTERNET 1 MET</div>
<div class="td" style="left:571px;top:695px">JALTECH</div>
<div class="td" style="left:780px;top:695px">LA FORTUNA</div>
<div class="td num" style="left:989px;top:695px">$ 1,000</div>
<div class="td num" style="left:1093px;top:695px">$ 6,000</div>
<div class="ic" style="left:1209px;top:706px"><svg width="12" height="12" viewBox="0 0 12 12"><path d="M8.6 0 L11.2 2.6 L2.9 10.9 L0 11.2 L0.3 8.3 Z" fill="#3a6fb5"/><path d="M7.3 1.3 L9.9 3.9" stroke="#dbe6f3" stroke-width="0.75"/><path d="M1.8 8.6 L7.6 2.8" stroke="#7fa3d0" stroke-width="0.6" stroke-dasharray="0.8 0.8"/><path d="M0.7 8.9 L2.3 10.5 L0.5 10.7Z" fill="#f0f4fa"/></svg></div>
<div class="ic" style="left:1249px;top:706px"><svg width="10" height="12" viewBox="0 0 10 12"><path d="M3.2 1.6 V0.9 Q3.2 0 4.1 0 H6.1 Q7 0 7 0.9 V1.6 H6 V1 H4.2 V1.6Z" fill="#3a6fb5"/><rect x="0" y="1.5" width="10" height="1.2" fill="#3a6fb5"/><path d="M1 2.6 H9.1 V10 Q9.1 11.1 8 11.1 H2.1 Q1 11.1 1 10Z" fill="#3a6fb5"/><rect x="2.9" y="3.6" width="0.8" height="5.8" fill="#e6edf6"/><rect x="4.9" y="3.6" width="0.8" height="5.8" fill="#e6edf6"/><rect x="6.9" y="3.6" width="0.8" height="5.8" fill="#e6edf6"/></svg></div>
<div class="tb" style="left:249px;top:728px;width:1046px;height:1px"></div>
<div style="position:absolute;left:250px;top:730px;width:1044px;height:33px;background:#fff"></div>
<div class="td" style="left:258px;top:730px">CABPUL</div>
<div class="td" style="left:362px;top:730px">CABLE PULPO</div>
<div class="td" style="left:571px;top:730px">HIGH QUALITY</div>
<div class="td" style="left:780px;top:730px">LA FORTUNA</div>
<div class="td num" style="left:989px;top:730px">$ 7,000</div>
<div class="td num" style="left:1093px;top:730px">$ 15,000</div>
<div class="ic" style="left:1209px;top:741px"><svg width="12" height="12" viewBox="0 0 12 12"><path d="M8.6 0 L11.2 2.6 L2.9 10.9 L0 11.2 L0.3 8.3 Z" fill="#3a6fb5"/><path d="M7.3 1.3 L9.9 3.9" stroke="#dbe6f3" stroke-width="0.75"/><path d="M1.8 8.6 L7.6 2.8" stroke="#7fa3d0" stroke-width="0.6" stroke-dasharray="0.8 0.8"/><path d="M0.7 8.9 L2.3 10.5 L0.5 10.7Z" fill="#f0f4fa"/></svg></div>
<div class="ic" style="left:1249px;top:741px"><svg width="10" height="12" viewBox="0 0 10 12"><path d="M3.2 1.6 V0.9 Q3.2 0 4.1 0 H6.1 Q7 0 7 0.9 V1.6 H6 V1 H4.2 V1.6Z" fill="#3a6fb5"/><rect x="0" y="1.5" width="10" height="1.2" fill="#3a6fb5"/><path d="M1 2.6 H9.1 V10 Q9.1 11.1 8 11.1 H2.1 Q1 11.1 1 10Z" fill="#3a6fb5"/><rect x="2.9" y="3.6" width="0.8" height="5.8" fill="#e6edf6"/><rect x="4.9" y="3.6" width="0.8" height="5.8" fill="#e6edf6"/><rect x="6.9" y="3.6" width="0.8" height="5.8" fill="#e6edf6"/></svg></div>
<div class="tb" style="left:249px;top:763px;width:1046px;height:1px"></div>
<div style="position:absolute;left:250px;top:765px;width:1044px;height:33px;background:#f7f7f7"></div>
<div class="td" style="left:258px;top:765px">CABUNO</div>
<div class="td" style="left:362px;top:765px">CABLE UNO A UNO</div>
<div class="td" style="left:571px;top:765px">LATIN MOVIL</div>
<div class="td" style="left:780px;top:765px">LA FORTUNA</div>
<div class="td num" style="left:989px;top:765px">$ 1,000</div>
<div class="td num" style="left:1093px;top:765px">$ 5,000</div>
<div class="ic" style="left:1209px;top:776px"><svg width="12" height="12" viewBox="0 0 12 12"><path d="M8.6 0 L11.2 2.6 L2.9 10.9 L0 11.2 L0.3 8.3 Z" fill="#3a6fb5"/><path d="M7.3 1.3 L9.9 3.9" stroke="#dbe6f3" stroke-width="0.75"/><path d="M1.8 8.6 L7.6 2.8" stroke="#7fa3d0" stroke-width="0.6" stroke-dasharray="0.8 0.8"/><path d="M0.7 8.9 L2.3 10.5 L0.5 10.7Z" fill="#f0f4fa"/></svg></div>
<div class="ic" style="left:1249px;top:776px"><svg width="10" height="12" viewBox="0 0 10 12"><path d="M3.2 1.6 V0.9 Q3.2 0 4.1 0 H6.1 Q7 0 7 0.9 V1.6 H6 V1 H4.2 V1.6Z" fill="#3a6fb5"/><rect x="0" y="1.5" width="10" height="1.2" fill="#3a6fb5"/><path d="M1 2.6 H9.1 V10 Q9.1 11.1 8 11.1 H2.1 Q1 11.1 1 10Z" fill="#3a6fb5"/><rect x="2.9" y="3.6" width="0.8" height="5.8" fill="#e6edf6"/><rect x="4.9" y="3.6" width="0.8" height="5.8" fill="#e6edf6"/><rect x="6.9" y="3.6" width="0.8" height="5.8" fill="#e6edf6"/></svg></div>
<div class="tb" style="left:249px;top:798px;width:1046px;height:1px"></div>
<div style="position:absolute;left:250px;top:800px;width:1044px;height:33px;background:#fff"></div>
<div class="td" style="left:258px;top:800px">CABUSB</div>
<div class="td" style="left:362px;top:800px">CABLE USB 4000</div>
<div class="td" style="left:571px;top:800px">LATIN MOVIL</div>
<div class="td" style="left:780px;top:800px">LA FORTUNA</div>
<div class="td num" style="left:989px;top:800px">$ 1,000</div>
<div class="td num" style="left:1093px;top:800px">$ 4,000</div>
<div class="ic" style="left:1209px;top:811px"><svg width="12" height="12" viewBox="0 0 12 12"><path d="M8.6 0 L11.2 2.6 L2.9 10.9 L0 11.2 L0.3 8.3 Z" fill="#3a6fb5"/><path d="M7.3 1.3 L9.9 3.9" stroke="#dbe6f3" stroke-width="0.75"/><path d="M1.8 8.6 L7.6 2.8" stroke="#7fa3d0" stroke-width="0.6" stroke-dasharray="0.8 0.8"/><path d="M0.7 8.9 L2.3 10.5 L0.5 10.7Z" fill="#f0f4fa"/></svg></div>
<div class="ic" style="left:1249px;top:811px"><svg width="10" height="12" viewBox="0 0 10 12"><path d="M3.2 1.6 V0.9 Q3.2 0 4.1 0 H6.1 Q7 0 7 0.9 V1.6 H6 V1 H4.2 V1.6Z" fill="#3a6fb5"/><rect x="0" y="1.5" width="10" height="1.2" fill="#3a6fb5"/><path d="M1 2.6 H9.1 V10 Q9.1 11.1 8 11.1 H2.1 Q1 11.1 1 10Z" fill="#3a6fb5"/><rect x="2.9" y="3.6" width="0.8" height="5.8" fill="#e6edf6"/><rect x="4.9" y="3.6" width="0.8" height="5.8" fill="#e6edf6"/><rect x="6.9" y="3.6" width="0.8" height="5.8" fill="#e6edf6"/></svg></div>
<div class="tb" style="left:249px;top:833px;width:1046px;height:1px"></div>
<div style="position:absolute;left:250px;top:835px;width:1044px;height:33px;background:#f7f7f7"></div>
<div class="td" style="left:258px;top:835px">CABVGA</div>
<div class="td" style="left:362px;top:835px">CABLE VGA 1.8 MTS</div>
<div class="td" style="left:571px;top:835px">LATIN MOVIL</div>
<div class="td" style="left:780px;top:835px">LA FORTUNA</div>
<div class="td num" style="left:989px;top:835px">$ 3,000</div>
<div class="td num" style="left:1093px;top:835px">$ 10,000</div>
<div class="ic" style="left:1209px;top:846px"><svg width="12" height="12" viewBox="0 0 12 12"><path d="M8.6 0 L11.2 2.6 L2.9 10.9 L0 11.2 L0.3 8.3 Z" fill="#3a6fb5"/><path d="M7.3 1.3 L9.9 3.9" stroke="#dbe6f3" stroke-width="0.75"/><path d="M1.8 8.6 L7.6 2.8" stroke="#7fa3d0" stroke-width="0.6" stroke-dasharray="0.8 0.8"/><path d="M0.7 8.9 L2.3 10.5 L0.5 10.7Z" fill="#f0f4fa"/></svg></div>
<div class="ic" style="left:1249px;top:846px"><svg width="10" height="12" viewBox="0 0 10 12"><path d="M3.2 1.6 V0.9 Q3.2 0 4.1 0 H6.1 Q7 0 7 0.9 V1.6 H6 V1 H4.2 V1.6Z" fill="#3a6fb5"/><rect x="0" y="1.5" width="10" height="1.2" fill="#3a6fb5"/><path d="M1 2.6 H9.1 V10 Q9.1 11.1 8 11.1 H2.1 Q1 11.1 1 10Z" fill="#3a6fb5"/><rect x="2.9" y="3.6" width="0.8" height="5.8" fill="#e6edf6"/><rect x="4.9" y="3.6" width="0.8" height="5.8" fill="#e6edf6"/><rect x="6.9" y="3.6" width="0.8" height="5.8" fill="#e6edf6"/></svg></div>
<div class="tb" style="left:249px;top:868px;width:1046px;height:1px"></div>
<div style="position:absolute;left:250px;top:870px;width:1044px;height:33px;background:#fff"></div>
<div class="td" style="left:258px;top:870px">CARCUE</div>
<div class="td" style="left:362px;top:870px">CARTERA DE CUERO</div>
<div class="td" style="left:571px;top:870px">ARAMO</div>
<div class="td" style="left:780px;top:870px">LA FORTUNA</div>
<div class="td num" style="left:989px;top:870px">$ 4,500</div>
<div class="td num" style="left:1093px;top:870px">$ 15,000</div>
<div class="ic" style="left:1209px;top:881px"><svg width="12" height="12" viewBox="0 0 12 12"><path d="M8.6 0 L11.2 2.6 L2.9 10.9 L0 11.2 L0.3 8.3 Z" fill="#3a6fb5"/><path d="M7.3 1.3 L9.9 3.9" stroke="#dbe6f3" stroke-width="0.75"/><path d="M1.8 8.6 L7.6 2.8" stroke="#7fa3d0" stroke-width="0.6" stroke-dasharray="0.8 0.8"/><path d="M0.7 8.9 L2.3 10.5 L0.5 10.7Z" fill="#f0f4fa"/></svg></div>
<div class="ic" style="left:1249px;top:881px"><svg width="10" height="12" viewBox="0 0 10 12"><path d="M3.2 1.6 V0.9 Q3.2 0 4.1 0 H6.1 Q7 0 7 0.9 V1.6 H6 V1 H4.2 V1.6Z" fill="#3a6fb5"/><rect x="0" y="1.5" width="10" height="1.2" fill="#3a6fb5"/><path d="M1 2.6 H9.1 V10 Q9.1 11.1 8 11.1 H2.1 Q1 11.1 1 10Z" fill="#3a6fb5"/><rect x="2.9" y="3.6" width="0.8" height="5.8" fill="#e6edf6"/><rect x="4.9" y="3.6" width="0.8" height="5.8" fill="#e6edf6"/><rect x="6.9" y="3.6" width="0.8" height="5.8" fill="#e6edf6"/></svg></div>
<div class="tb" style="left:249px;top:903px;width:1046px;height:1px"></div>
<div class="tb" style="left:249px;top:238px;width:1px;height:645px"></div>
<div class="tb" style="left:353px;top:238px;width:1px;height:645px"></div>
<div class="tb" style="left:562px;top:238px;width:1px;height:645px"></div>
<div class="tb" style="left:771px;top:238px;width:1px;height:645px"></div>
<div class="tb" style="left:980px;top:238px;width:1px;height:645px"></div>
<div class="tb" style="left:1084px;top:238px;width:1px;height:645px"></div>
<div class="tb" style="left:1188px;top:238px;width:1px;height:645px"></div>
<div class="tb" style="left:1240px;top:238px;width:1px;height:645px"></div>
<div class="tb" style="left:1294px;top:238px;width:1px;height:645px"></div>
</body></html>
